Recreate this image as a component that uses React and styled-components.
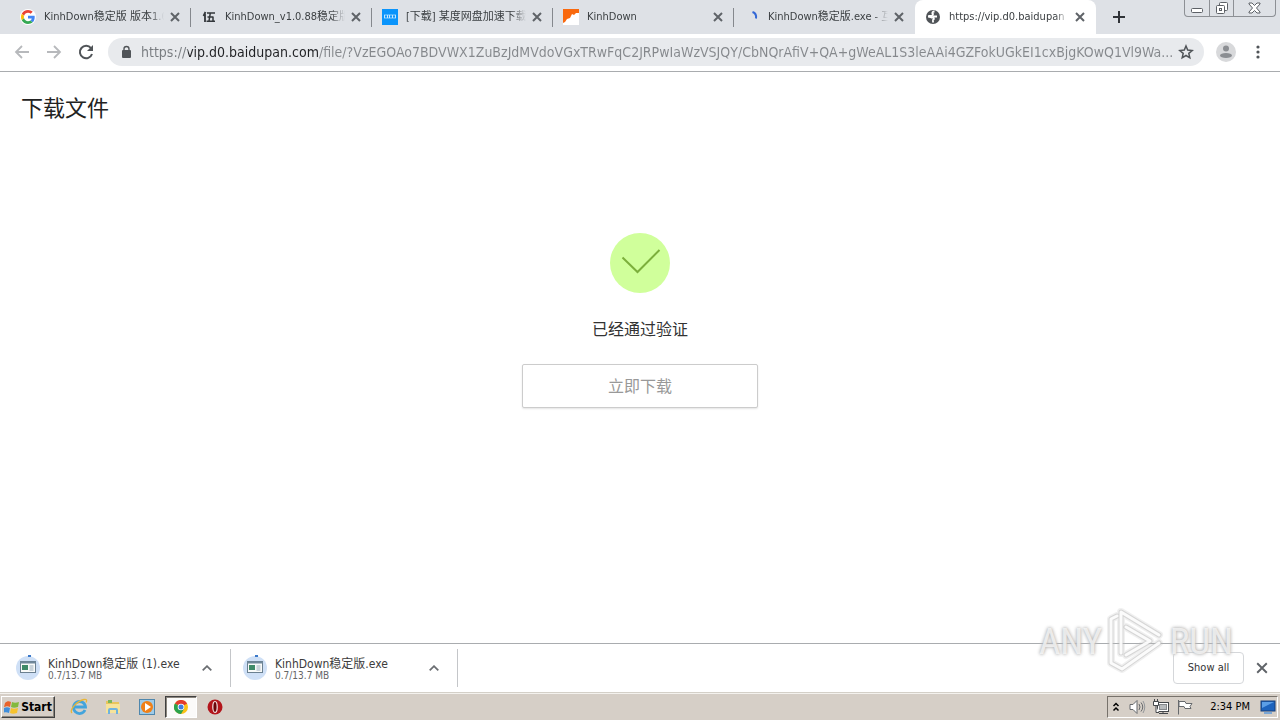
import React from "react";
import styled, { createGlobalStyle, css } from "styled-components";

const GlobalStyle = createGlobalStyle`
  *, *::before, *::after { box-sizing: border-box; }
  body {
    margin: 0;
    background: #fff;
    color: #222;
    font-family: "DejaVu Sans Condensed", "Noto Sans CJK SC", sans-serif;
    font-size: 11px;
  }
  button, input { font: inherit; color: inherit; }
`;

const Browser = styled.div`
  position: relative;
  display: flex;
  flex-direction: column;
  min-height: 100vh;
`;

const plainButton = css`
  display: flex;
  align-items: center;
  justify-content: center;
  flex: none;
  margin: 0;
  padding: 0;
  border: 0;
  background: none;
`;

/* ---------- tab strip ---------- */

const TabStrip = styled.header`
  display: flex;
  height: 34px;
  padding-left: 10px;
  background: #dee1e6;
`;

const Tab = styled.div`
  position: relative;
  display: flex;
  align-items: center;
  flex: 0 1 181px;
  min-width: 0;
  padding: 0 8px 0 10px;
  background: ${(p) => (p.$active ? "#fff" : "transparent")};
  border-radius: ${(p) => (p.$active ? "8px 8px 0 0" : "0")};

  &::after {
    content: "";
    display: ${(p) => (p.$divider ? "block" : "none")};
    position: absolute;
    right: 0;
    top: 8px;
    width: 1px;
    height: 19px;
    background: #85888d;
  }
`;

const TabIcon = styled.span`
  display: flex;
  flex: none;
  width: 16px;
  height: 16px;
`;

const TabTitle = styled.span`
  flex: 1;
  min-width: 0;
  margin: 0 3px 0 8px;
  overflow: hidden;
  white-space: nowrap;
  line-height: 20px;
  color: #3c4043;
  mask-image: linear-gradient(to right, #000 calc(100% - 14px), transparent);
`;

const TabClose = styled.button`
  ${plainButton}
  width: 16px;
  height: 16px;
`;

const NewTab = styled.button`
  ${plainButton}
  width: 28px;
  height: 34px;
  margin-left: 9px;
`;

const WindowControls = styled.div`
  display: flex;
  height: 17px;
  margin: 0 4px 0 auto;
  border: 1px solid #8d9095;
  border-top: 0;
  border-radius: 0 0 4px 4px;
`;

const WindowButton = styled.button`
  ${plainButton}
  width: ${(p) => (p.$wide ? "42px" : "24px")};
  border-left: ${(p) => (p.$first ? "0" : "1px solid #8d9095")};
`;

/* ---------- toolbar ---------- */

const Toolbar = styled.nav`
  display: flex;
  align-items: center;
  height: 38px;
  padding: 0 6px 1px;
  border-bottom: 1px solid #a9acaf;
`;

const ToolButton = styled.button`
  ${plainButton}
  width: ${(p) => (p.$compact ? "20px" : "32px")};
  height: 28px;
`;

const Omnibox = styled.div`
  display: flex;
  align-items: center;
  flex: 1;
  min-width: 0;
  height: 28px;
  margin: 0 6px;
  padding: 0 8px 0 10px;
  border-radius: 14px;
  background: #e8eaed;
`;

const Address = styled.input`
  flex: 1;
  min-width: 0;
  height: 28px;
  margin: 0 0 0 7px;
  padding: 0 0 1px;
  border: 0;
  outline: 0;
  font-size: 14px;
  text-overflow: ellipsis;
  color: transparent;
  background: linear-gradient(to right, #777b7f 47px, #202124 47px, #202124 178px, #85888c 178px);
  background-clip: text;
  -webkit-background-clip: text;
`;

/* ---------- page ---------- */

const Page = styled.main`
  display: flex;
  flex-direction: column;
  align-items: center;
  flex: 1;
  padding: 21px;
`;

const PageTitle = styled.h1`
  align-self: stretch;
  margin: 0 0 108px;
  font-size: 22px;
  font-weight: 400;
  line-height: 32px;
  color: #222;
`;

const Message = styled.p`
  margin: 25px 0 22px;
  font-size: 16px;
  line-height: 24px;
  color: #333;
`;

const DownloadButton = styled.button`
  width: 236px;
  height: 44px;
  padding: 0 0 2px;
  border: 1px solid #ccc;
  border-radius: 2px;
  background: #fff;
  box-shadow: 0 1px 2px #e4e4e4;
  font-size: 16px;
  color: #999;
`;

/* ---------- download shelf ---------- */

const Shelf = styled.section`
  display: flex;
  align-items: center;
  height: 49px;
  padding: 0 8px 1px 4px;
  border-top: 1px solid #a9acaf;
  background: #fff;
`;

const Download = styled.article`
  display: flex;
  align-items: center;
  width: 227px;
  height: 38px;
  padding: 0 13px 0 12px;
  border-right: 1px solid #c4c6c9;
`;

const DownloadText = styled.div`
  flex: 1;
  min-width: 0;
  margin-left: 8px;
  padding-top: 4px;
  white-space: nowrap;
`;

const FileName = styled.div`
  font-size: 12px;
  line-height: 13px;
  color: #3c3c3c;
`;

const FileSize = styled.div`
  font-size: 10px;
  line-height: 10px;
  color: #666;
`;

const ShelfButton = styled.button`
  ${plainButton}
  width: 20px;
  height: 20px;
`;

const ShowAll = styled.button`
  width: 71px;
  height: 32px;
  margin: 0 8px 0 auto;
  padding: 0;
  border: 1px solid #d5d7da;
  border-radius: 4px;
  background: #fff;
  color: #333;
`;

/* ---------- taskbar ---------- */

const Taskbar = styled.footer`
  display: flex;
  align-items: center;
  height: 28px;
  padding: 0 2px 0 1px;
  border-top: 1px solid #d4d0c8;
  background: #d6cfc7;
  box-shadow: inset 0 1px 0 #f4f2ee;
`;

const StartButton = styled.button`
  ${plainButton}
  gap: 1px;
  width: 54px;
  height: 22px;
  margin-right: 8px;
  border: 1px solid;
  border-color: #fff #404040 #404040 #fff;
  box-shadow: inset -1px -1px 0 #8a857d;
  font-size: 12px;
  font-weight: 700;
  color: #000;
`;

const TaskButton = styled.button`
  ${plainButton}
  width: 32px;
  height: 22px;
  margin-right: 2px;
  ${(p) =>
    p.$active &&
    css`
      border: 1px solid;
      border-color: #404040 #fff #fff #404040;
      background: #fbfaf9;
      box-shadow: inset 1px 1px 0 #8a857d;
    `}
`;

const Tray = styled.div`
  display: flex;
  align-items: center;
  height: 22px;
  margin-left: auto;
  padding: 0 1px 0 4px;
  border: 1px solid;
  border-color: #77726b #fff #fff #77726b;
  color: #000;
`;

const TrayButton = styled.button`
  ${plainButton}
  width: ${(p) => (p.$narrow ? "8px" : "18px")};
  height: 18px;
  margin-right: ${(p) => (p.$narrow ? "8px" : "6px")};
`;

const Clock = styled.time`
  margin: 0 10px;
  white-space: nowrap;
`;

/* ---------- watermark ---------- */

const Watermark = styled.div`
  position: absolute;
  right: 47px;
  bottom: 46px;
  display: flex;
  align-items: center;
  justify-content: space-between;
  width: 194px;
  height: 66px;
  pointer-events: none;
  font-family: "Roboto Condensed", "Liberation Sans Narrow", Roboto, sans-serif;
  font-size: 37px;
  color: rgba(255, 255, 255, 0.7);
  text-shadow: 0 0 3px #b5b5b5, 0 0 4px #c5c5c5;
`;

/* ---------- drawings ---------- */

const Cross = ({ size = 10, color = "#5f6368", width = 2 }) => (
  <svg width={size} height={size} viewBox="0 0 10 10" aria-hidden="true">
    <path d="M1 1l8 8M9 1L1 9" stroke={color} strokeWidth={width} />
  </svg>
);

const GoogleIcon = () => (
  <svg width="16" height="16" viewBox="0 0 48 48">
    <circle cx="24" cy="24" r="24" fill="#fff" />
    <g transform="translate(3 3) scale(.875)">
      <path fill="#EA4335" d="M24 9.5c3.54 0 6.71 1.22 9.21 3.6l6.85-6.85C35.9 2.38 30.47 0 24 0 14.62 0 6.51 5.38 2.56 13.22l7.98 6.19C12.43 13.72 17.74 9.5 24 9.5z" />
      <path fill="#4285F4" d="M46.98 24.55c0-1.57-.15-3.09-.38-4.55H24v9.02h12.94c-.58 2.96-2.26 5.48-4.78 7.18l7.73 6c4.51-4.18 7.09-10.36 7.09-17.65z" />
      <path fill="#FBBC05" d="M10.53 28.59c-.48-1.45-.76-2.99-.76-4.59s.27-3.14.76-4.59l-7.98-6.19C.92 16.46 0 20.12 0 24c0 3.88.92 7.54 2.56 10.78l7.97-6.19z" />
      <path fill="#34A853" d="M24 48c6.48 0 11.93-2.13 15.89-5.81l-7.73-6c-2.15 1.45-4.92 2.3-8.16 2.3-6.26 0-11.57-4.22-13.47-9.91l-7.98 6.19C6.51 42.62 14.62 48 24 48z" />
    </g>
  </svg>
);

const FiveIcon = () => (
  <svg width="16" height="16" viewBox="0 0 16 16" stroke="#33373b" fill="none">
    <path d="M4.500 3L2.500 7M4 5v8" strokeWidth="1.800" />
    <path d="M6 4h8M6.500 8h6M5.500 12.300h8.500M9.300 4L8 12M12 8v4" strokeWidth="1.500" />
  </svg>
);

const BlueIcon = () => (
  <svg width="16" height="16" viewBox="0 0 16 16">
    <rect width="16" height="16" fill="#0a94fb" />
    <path d="M2 6h12M2 9h12" stroke="#8fd0ff" />
    <path d="M2.500 6v3M5.500 6v3M7.500 6v3M10.500 6v3M13.500 6v3" stroke="#c4e6ff" />
  </svg>
);

const OrangeIcon = () => (
  <svg width="16" height="16" viewBox="0 0 16 16">
    <rect width="16" height="16" fill="#fff" />
    <path d="M0 0h16v4l-3 0-2 2-2-1-2 4-3 1-2 3-2 1z" fill="#f9690e" />
  </svg>
);

const LoadingIcon = () => (
  <svg width="16" height="16" viewBox="0 0 16 16">
    <path d="M8.500 3c3 1 4 3.500 3.500 6.500" fill="none" stroke="#3367d6" strokeWidth="2" />
  </svg>
);

const GlobeIcon = () => (
  <svg width="16" height="16" viewBox="0 0 16 16">
    <circle cx="8" cy="8" r="7" fill="#505458" />
    <path d="M9.500 2.500c-2 0-3 1.500-1.500 2.500l-1 2H3.500M3 7.500c2 0 3 1 4.500 1s2 2 .5 2.500v2.500M8 7.500h4" fill="none" stroke="#fff" strokeWidth="1.800" />
  </svg>
);

const ArrowIcon = ({ flip }) => (
  <svg width="16" height="16" viewBox="0 0 16 16" fill="none" stroke="#b7b9bc" strokeWidth="1.800">
    <path d={flip ? "M1 8h13M8 2l6 6-6 6" : "M15 8H2M8 2L2 8l6 6"} />
  </svg>
);

const ReloadIcon = () => (
  <svg width="16" height="16" viewBox="0 0 16 16">
    <path d="M13 4.2A6.2 6.2 0 1 0 14 10" fill="none" stroke="#505458" strokeWidth="2" />
    <path d="M15 1v6H9z" fill="#505458" />
  </svg>
);

const LockIcon = () => (
  <svg width="16" height="16" viewBox="0 0 16 16">
    <rect x="4" y="6" width="9" height="8" rx="1" fill="#505458" />
    <path d="M6 7V5a2.5 2.5 0 0 1 5 0v2" fill="none" stroke="#505458" strokeWidth="1.4" />
  </svg>
);

const StarIcon = () => (
  <svg width="16" height="16" viewBox="0 0 16 16">
    <path d="M8 2l1.7 4.1 4.5.4-3.4 2.9 1 4.4L8 11.5l-3.8 2.3 1-4.4-3.4-2.9 4.500-.4z" fill="none" stroke="#505458" strokeWidth="1.5" />
  </svg>
);

const AvatarIcon = () => (
  <svg width="20" height="20" viewBox="0 0 20 20">
    <circle cx="10" cy="10" r="10" fill="#d8d9db" />
    <circle cx="10" cy="6.500" r="3" fill="#8b8e92" />
    <ellipse cx="10" cy="13.5" rx="6" ry="2.600" fill="#8b8e92" />
  </svg>
);

const MenuIcon = () => (
  <svg width="4" height="14" viewBox="0 0 4 14" fill="#505458">
    <circle cx="2" cy="2" r="1.6" />
    <circle cx="2" cy="7" r="1.6" />
    <circle cx="2" cy="12" r="1.6" />
  </svg>
);

const SuccessIcon = () => (
  <svg width="60" height="60" viewBox="0 0 60 60">
    <circle cx="30" cy="30" r="30" fill="#d0ff9b" />
    <path d="M12.5 24.5L27.5 39l22-22" fill="none" stroke="#7caf3c" strokeWidth="2" />
  </svg>
);

const FileIcon = () => (
  <svg width="24" height="28" viewBox="0 0 24 28">
    <circle cx="12" cy="14" r="12" fill="#cfe0f6" />
    <path d="M12 2h3" fill="none" stroke="#3b78c9" strokeWidth="2" />
    <rect x="4.500" y="7.500" width="15" height="11" fill="#f8faf9" stroke="#6b8090" />
    <path d="M4 8.500h16" stroke="#70889a" strokeWidth="2" />
    <rect x="6" y="11" width="6" height="5" fill="#3f8a68" />
    <path d="M13.500 12h4M13.500 14h4M13.500 16h4" stroke="#9aacbb" />
  </svg>
);

const ChevronIcon = () => (
  <svg width="10" height="6" viewBox="0 0 10 6" fill="none" stroke="#6b6e72" strokeWidth="1.800">
    <path d="M.7 5.300L5 1.200l4.300 4.100" />
  </svg>
);

const FlagIcon = () => (
  <svg width="16" height="16" viewBox="0 0 16 16">
    <path d="M1 4c2-2 4-2 6-1L6 8C4 7 3 7 0 8z" fill="#e8632b" />
    <path d="M8 3c2 1 4 1 7 0l-1 5c-3 1-5 1-7 0z" fill="#83b93c" />
    <path d="M0 9c2-1 4-1 6 0l-1 5c-2-1-4-1-6 0z" fill="#3f8edb" />
    <path d="M7 9c2 1 4 1 7 0l-1 5c-3 1-5 1-7 0z" fill="#f6c22d" />
  </svg>
);

const ExplorerIcon = () => (
  <svg width="18" height="18" viewBox="0 0 18 18" fill="none">
    <path d="M15 12a6 6 0 1 1 .5-3H4" stroke="#43a4dc" strokeWidth="2.800" />
    <path d="M2 15C-1 12 7 3 14 1.500c3-.5 3 1 2 3" stroke="#e9b636" strokeWidth="1.300" />
  </svg>
);

const FolderIcon = () => (
  <svg width="18" height="18" viewBox="0 0 18 18">
    <path d="M2 3h5l1 1h7v9H2z" fill="#e8c55c" />
    <path d="M4 2h4v3H4z" fill="#7ab65a" />
    <path d="M2 6h14v9H2z" fill="#f6e39a" />
    <path d="M4 16v-4q0-2 2-2h6q2 0 2 2v4h-2v-4H6v4z" fill="#6fb3de" />
  </svg>
);

const PlayerIcon = () => (
  <svg width="18" height="18" viewBox="0 0 18 18">
    <rect x="1.500" y="1.500" width="15" height="15" fill="#9fcbe8" stroke="#4f87ad" />
    <circle cx="9" cy="9" r="6" fill="#f08018" />
    <path d="M7 5l6 4-6 4z" fill="#fff" />
  </svg>
);

const ChromeIcon = () => (
  <svg width="14" height="14" viewBox="0 0 14 14">
    <circle cx="7" cy="7" r="7" fill="#fbc116" />
    <path d="M7 7L.9 3.500A7 7 0 0 1 13.100 3.500z" fill="#e33b2e" />
    <path d="M7 7L.9 3.500A7 7 0 0 0 7 14l3-5z" fill="#2ba24c" />
    <circle cx="7" cy="7" r="3.300" fill="#fff" />
    <circle cx="7" cy="7" r="2.500" fill="#3f7de0" />
  </svg>
);

const OperaIcon = () => (
  <svg width="16" height="16" viewBox="0 0 16 16">
    <circle cx="8" cy="8" r="7.500" fill="#b3151b" />
    <ellipse cx="8" cy="8" rx="2.200" ry="5.500" fill="#6b0508" stroke="#f4e6e6" strokeWidth="1.200" />
  </svg>
);

const ExpandIcon = () => (
  <svg width="8" height="10" viewBox="0 0 8 10" fill="none" stroke="#000" strokeWidth="1.500">
    <path d="M1.500 4L4 1.500 6.500 4M1.500 8.500L4 6l2.500 2.500" />
  </svg>
);

const SpeakerIcon = () => (
  <svg width="18" height="16" viewBox="0 0 18 16" fill="none" stroke="#66696c">
    <path d="M2 5.500h3l4-4v13l-4-4H2z" fill="#fff" />
    <path d="M11 5q2 3 0 6M13 3.500q3.500 4.500 0 9" />
    <path d="M15 2q3.500 6 0 12" stroke="#94979a" />
  </svg>
);

const NetworkIcon = () => (
  <svg width="18" height="16" viewBox="0 0 18 16" fill="#fff" stroke="#44474a">
    <rect x="5.500" y="3.500" width="11" height="9" />
    <rect x="7.500" y="5.500" width="7" height="5" fill="#b7babc" stroke="#85888b" />
    <path d="M7 14.500h9M11 12v2M1.500 2.500h5v4h-5zM2.500 0v3M5.500 0v3M4 7v6.500h3" />
  </svg>
);

const ActionIcon = () => (
  <svg width="18" height="16" viewBox="0 0 18 16" fill="#fff" stroke="#66696c">
    <path d="M2.500 1v14.500M3 2.500h6l1 2h6l-2 3 1 2H9l-1-2H3z" />
  </svg>
);

const DesktopIcon = () => (
  <svg width="16" height="14" viewBox="0 0 16 14">
    <rect x="1" y="1" width="14" height="10" fill="#1d63bd" stroke="#173f78" />
    <path d="M2 2h12L2 8z" fill="#5b9ee6" />
    <path d="M4 13h8" stroke="#7ba7d5" strokeWidth="2" />
  </svg>
);

const markLines = "M15 45V4L53 27M11 8L5 11V55L16 61L53 35M20 47L44 33L20 19";

const PlayMark = () => (
  <svg width="60" height="66" viewBox="0 0 60 66" fill="none" strokeLinejoin="round" strokeLinecap="round">
    <path d={markLines} stroke="#bbb" strokeOpacity=".22" strokeWidth="8" />
    <path d={markLines} stroke="#bbb" strokeOpacity=".5" strokeWidth="5" />
    <path d={markLines} stroke="#fff" strokeOpacity=".9" strokeWidth="3" />
  </svg>
);

const tabs = [
  { title: "KinhDown稳定版 版本1.0", icon: <GoogleIcon />, divider: true },
  { title: "KinhDown_v1.0.88稳定版", icon: <FiveIcon />, divider: true },
  { title: "[下载] 某度网盘加速下载", icon: <BlueIcon />, divider: true },
  { title: "KinhDown", icon: <OrangeIcon />, divider: true },
  { title: "KinhDown稳定版.exe - 互", icon: <LoadingIcon /> },
  { title: "https://vip.d0.baidupan", icon: <GlobeIcon />, active: true },
];

const downloads = ["KinhDown稳定版 (1).exe", "KinhDown稳定版.exe"];

const url =
  "https://vip.d0.baidupan.com/file/?VzEGOAo7BDVWX1ZuBzJdMVdoVGxTRwFqC2JRPwIaWzVSJQY/CbNQrAfiV+QA+gWeAL1S3leAAi4GZFokUGkEI1cxBjgKOwQ1Vl9Wa...";

export default function App() {
  return (
    <>
      <GlobalStyle />
      <Browser>
        <TabStrip>
          {tabs.map((tab) => (
            <Tab key={tab.title} $active={tab.active} $divider={tab.divider}>
              <TabIcon>{tab.icon}</TabIcon>
              <TabTitle>{tab.title}</TabTitle>
              <TabClose aria-label="Close tab"><Cross /></TabClose>
            </Tab>
          ))}
          <NewTab aria-label="New tab">
            <svg width="12" height="12" viewBox="0 0 12 12">
              <path d="M6 0v12M0 6h12" stroke="#303338" strokeWidth="2" />
            </svg>
          </NewTab>
          <WindowControls>
            <WindowButton $first aria-label="Minimize">
              <svg width="14" height="12" viewBox="0 0 14 12">
                <rect x="1.500" y="6.500" width="11" height="4" rx="1" fill="#fff" stroke="#5c6066" />
              </svg>
            </WindowButton>
            <WindowButton aria-label="Restore">
              <svg width="14" height="14" viewBox="0 0 14 14" fill="#fff" stroke="#5c6066">
                <rect x="4.500" y="1.500" width="8" height="8" rx="1" />
                <rect x="1.500" y="4.500" width="8" height="8" rx="1" />
                <rect x="4.500" y="7.500" width="2" height="2" />
              </svg>
            </WindowButton>
            <WindowButton $wide aria-label="Close">
              <svg width="13" height="12" viewBox="0 0 13 12">
                <path d="M1 1h3l2.500 2.500L9 1h3v1L8.500 6l3.500 4v1H9L6.500 8.500 4 11H1v-1l3.500-4L1 2z" fill="#fff" stroke="#5c6066" />
              </svg>
            </WindowButton>
          </WindowControls>
        </TabStrip>

        <Toolbar>
          <ToolButton aria-label="Back"><ArrowIcon /></ToolButton>
          <ToolButton aria-label="Forward"><ArrowIcon flip /></ToolButton>
          <ToolButton aria-label="Reload"><ReloadIcon /></ToolButton>
          <Omnibox>
            <LockIcon />
            <Address aria-label="Address" type="text" defaultValue={url} spellCheck={false} />
            <ToolButton $compact aria-label="Bookmark"><StarIcon /></ToolButton>
          </Omnibox>
          <ToolButton aria-label="Profile"><AvatarIcon /></ToolButton>
          <ToolButton aria-label="Menu"><MenuIcon /></ToolButton>
        </Toolbar>

        <Page>
          <PageTitle>下载文件</PageTitle>
          <SuccessIcon />
          <Message>已经通过验证</Message>
          <DownloadButton>立即下载</DownloadButton>
        </Page>

        <Shelf>
          {downloads.map((name) => (
            <Download key={name}>
              <FileIcon />
              <DownloadText>
                <FileName>{name}</FileName>
                <FileSize>0.7/13.7 MB</FileSize>
              </DownloadText>
              <ShelfButton aria-label="Download options"><ChevronIcon /></ShelfButton>
            </Download>
          ))}
          <ShowAll>Show all</ShowAll>
          <ShelfButton aria-label="Close downloads"><Cross size={12} width={1.6} /></ShelfButton>
        </Shelf>

        <Taskbar>
          <StartButton><FlagIcon />Start</StartButton>
          <TaskButton aria-label="Internet Explorer"><ExplorerIcon /></TaskButton>
          <TaskButton aria-label="Windows Explorer"><FolderIcon /></TaskButton>
          <TaskButton aria-label="Media Player"><PlayerIcon /></TaskButton>
          <TaskButton $active aria-label="Chrome"><ChromeIcon /></TaskButton>
          <TaskButton aria-label="Opera"><OperaIcon /></TaskButton>
          <Tray>
            <TrayButton $narrow aria-label="Show hidden icons"><ExpandIcon /></TrayButton>
            <TrayButton aria-label="Volume"><SpeakerIcon /></TrayButton>
            <TrayButton aria-label="Network"><NetworkIcon /></TrayButton>
            <TrayButton aria-label="Action Center"><ActionIcon /></TrayButton>
            <Clock dateTime="14:34">2:34 PM</Clock>
            <DesktopIcon />
          </Tray>
        </Taskbar>

        <Watermark>
          <span>ANY</span>
          <PlayMark />
          <span>RUN</span>
        </Watermark>
      </Browser>
    </>
  );
}
